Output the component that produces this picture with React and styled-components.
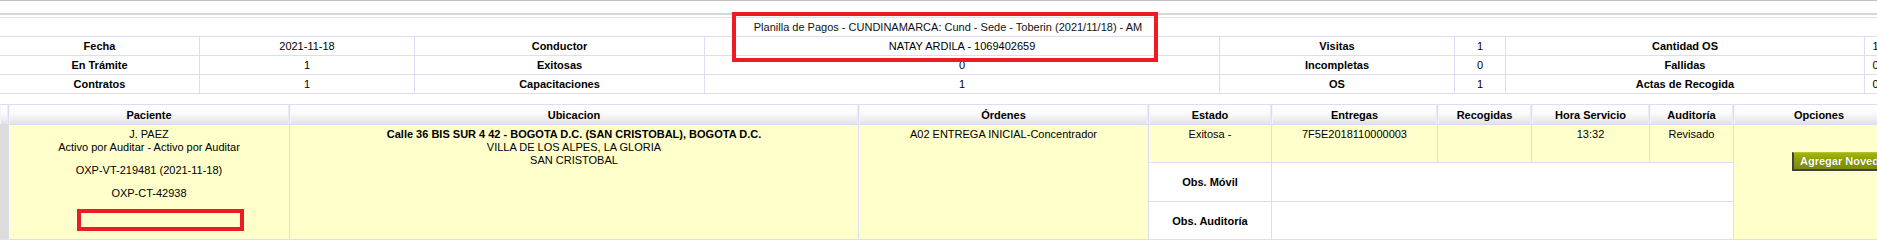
import React from "react";
import styled, { createGlobalStyle } from "styled-components";

const LINE = "#dcdcf4";
const YELLOW = "#ffffcc";

const Global = createGlobalStyle`
  html, body { margin: 0; padding: 0; background: #fff; overflow: hidden; }
  body {
    font-family: "Liberation Sans", Arial, sans-serif;
    font-size: 11px;
    color: #000;
  }
  * { box-sizing: border-box; }
`;

const Page = styled.div`
  position: relative;
  width: 1910px;
  height: 243px;
`;

const TopRule = styled.div`
  height: 15px;
  border-top: 1px solid #c3c3c3;
  border-bottom: 2px solid #d7d7d7;
`;

const Summary = styled.section`
  margin-top: 2px;
  display: flex;
  flex-direction: column;
`;

const Title = styled.div`
  width: 1896px;
  height: 20px;
  border-top: 1px solid #e3e3ea;
  border-bottom: 1px solid ${LINE};
  display: flex;
  align-items: center;
  justify-content: center;
  color: #111;
`;

const SummaryGrid = styled.div`
  display: grid;
  grid-template-columns: 200px 215px 290px 515px 235px 51px 359px 22px;
  grid-auto-rows: 19px;
`;

const SumCell = styled.div`
  border-right: 1px solid ${LINE};
  border-bottom: 1px solid ${LINE};
  display: flex;
  align-items: center;
  justify-content: center;
  white-space: nowrap;
  font-weight: ${(p) => (p.$label ? 700 : 400)};
`;

const Orders = styled.section`
  margin-top: 10px;
  border-top: 1px solid ${LINE};
  display: grid;
  grid-template-columns: 9px 281px 569px 290px 123px 166px 94px 118px 84px 171px;
  grid-template-rows: 20px 38px 39px 38px;
`;

const Cell = styled.div`
  border-right: 1px solid ${LINE};
  border-bottom: 1px solid ${LINE};
`;

const Head = styled(Cell)`
  background: linear-gradient(#ffffff 0%, #fbfbfb 45%, #e2e2e2 100%);
  box-shadow: inset -1px 0 0 #ececf8, inset 1px 0 0 #f4f4fc;
  font-weight: 700;
  display: flex;
  align-items: center;
  justify-content: center;
  white-space: nowrap;
`;

const Gutter = styled(Cell)`
  grid-row: 2 / span 3;
  background: #dcdcdc;
`;

const Data = styled(Cell)`
  grid-row: ${(p) => (p.$tall ? "2 / span 3" : "2")};
  background: ${YELLOW};
  text-align: center;
  padding-top: 3px;
  line-height: 13px;
  white-space: nowrap;
`;

const Strong = styled.div`
  font-weight: 700;
`;

const Code = styled.div`
  margin-top: 10px;
`;

const ObsLabel = styled(Cell)`
  grid-column: 5;
  grid-row: ${(p) => p.$row};
  background: #fff;
  font-weight: 700;
  display: flex;
  align-items: center;
  justify-content: center;
  white-space: nowrap;
`;

const ObsValue = styled(Cell)`
  grid-column: 6 / span 4;
  grid-row: ${(p) => p.$row};
  background: #fff;
`;

const Options = styled(Cell)`
  grid-column: 10;
  grid-row: 2 / span 3;
  background: ${YELLOW};
  padding: 27px 0 0 58px;
  display: flex;
  align-items: flex-start;
`;

const Button = styled.button`
  height: 19px;
  padding: 0 8px 0 6px;
  margin: 0;
  font-family: "Liberation Sans", Arial, sans-serif;
  font-size: 11px;
  font-weight: 700;
  color: #fff;
  white-space: nowrap;
  text-shadow: 0 0 1px rgba(40, 50, 0, 0.6);
  background: linear-gradient(#a6b508, #8a9a00 55%, #7d8c00);
  border-top: 1px solid #b4c234;
  border-left: 2px solid #3f3f3f;
  border-right: 2px solid #3f3f3f;
  border-bottom: 2px solid #3f3f3f;
  cursor: pointer;
`;

const Mark = styled.div`
  position: absolute;
  left: ${(p) => p.$x}px;
  top: ${(p) => p.$y}px;
  width: ${(p) => p.$w}px;
  height: ${(p) => p.$h}px;
  border: 4px solid #ed1c24;
  pointer-events: none;
`;

const summaryRows = [
  ["Fecha", "2021-11-18", "Conductor", "NATAY ARDILA - 1069402659", "Visitas", "1", "Cantidad OS", "1"],
  ["En Trámite", "1", "Exitosas", "0", "Incompletas", "0", "Fallidas", "0"],
  ["Contratos", "1", "Capacitaciones", "1", "OS", "1", "Actas de Recogida", "0"],
];

const headers = [
  "Paciente",
  "Ubicacion",
  "Órdenes",
  "Estado",
  "Entregas",
  "Recogidas",
  "Hora Servicio",
  "Auditoría",
  "Opciones",
];

export default function App() {
  return (
    <Page>
      <Global />
      <TopRule />
      <Summary>
        <Title>Planilla de Pagos - CUNDINAMARCA: Cund - Sede - Toberin (2021/11/18) - AM</Title>
        <SummaryGrid>
          {summaryRows.map((row, r) =>
            row.map((txt, c) => (
              <SumCell key={`${r}-${c}`} $label={c % 2 === 0}>
                {txt}
              </SumCell>
            ))
          )}
        </SummaryGrid>
      </Summary>

      <Orders>
        <Head />
        {headers.map((h) => (
          <Head key={h}>{h}</Head>
        ))}

        <Gutter />
        <Data $tall>
          <div>J. PAEZ</div>
          <div>Activo por Auditar - Activo por Auditar</div>
          <Code>OXP-VT-219481 (2021-11-18)</Code>
          <Code>OXP-CT-42938</Code>
        </Data>
        <Data $tall>
          <Strong>Calle 36 BIS SUR 4 42 - BOGOTA D.C. (SAN CRISTOBAL), BOGOTA D.C.</Strong>
          <div>VILLA DE LOS ALPES, LA GLORIA</div>
          <div>SAN CRISTOBAL</div>
        </Data>
        <Data $tall>A02 ENTREGA INICIAL-Concentrador</Data>
        <Data>Exitosa -</Data>
        <Data>7F5E2018110000003</Data>
        <Data />
        <Data>13:32</Data>
        <Data>Revisado</Data>
        <Options>
          <Button type="button">Agregar Novedad</Button>
        </Options>

        <ObsLabel $row={3}>Obs. Móvil</ObsLabel>
        <ObsValue $row={3} />
        <ObsLabel $row={4}>Obs. Auditoría</ObsLabel>
        <ObsValue $row={4} />
      </Orders>

      <Mark $x={732} $y={12} $w={426} $h={50} />
      <Mark $x={77} $y={209} $w={167} $h={22} />
    </Page>
  );
}
